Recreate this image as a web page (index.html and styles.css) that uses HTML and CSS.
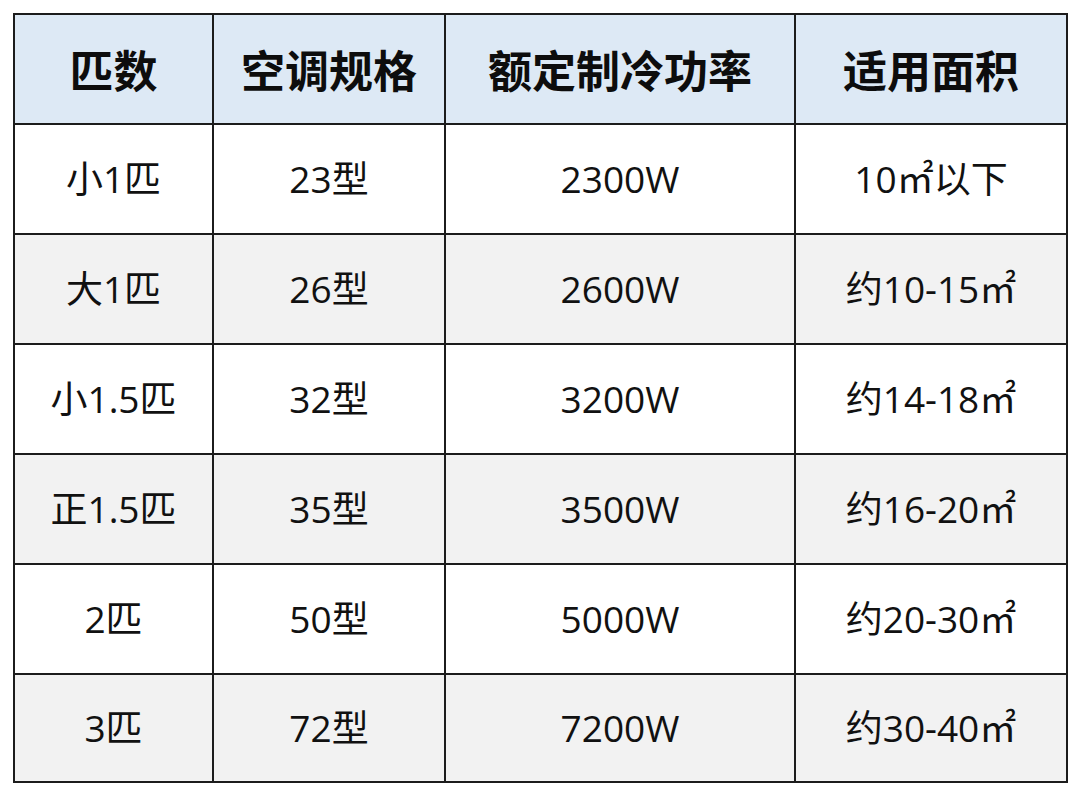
FILE: index.html
```html
<!DOCTYPE html>
<html lang="zh">
<head>
<meta charset="utf-8">
<link rel="stylesheet" href="styles.css">
</head>
<body>
<table class="spec">
  <colgroup>
    <col class="c1"><col class="c2"><col class="c3"><col class="c4">
  </colgroup>
  <thead>
    <tr><th>匹数</th><th>空调规格</th><th>额定制冷功率</th><th>适用面积</th></tr>
  </thead>
  <tbody>
    <tr><td>小1匹</td><td>23型</td><td>2300W</td><td>10㎡以下</td></tr>
    <tr><td>大1匹</td><td>26型</td><td>2600W</td><td>约10-15㎡</td></tr>
    <tr><td>小1.5匹</td><td>32型</td><td>3200W</td><td>约14-18㎡</td></tr>
    <tr><td>正1.5匹</td><td>35型</td><td>3500W</td><td>约16-20㎡</td></tr>
    <tr><td>2匹</td><td>50型</td><td>5000W</td><td>约20-30㎡</td></tr>
    <tr><td>3匹</td><td>72型</td><td>7200W</td><td>约30-40㎡</td></tr>
  </tbody>
</table>
</body>
</html>
```
FILE: styles.css
```css
html, body {
  margin: 0;
  padding: 0;
  background: #ffffff;
}
body {
  padding: 13px 0 0 13px;
  font-family: "Noto Sans CJK SC", "Noto Sans", sans-serif;
  color: #111;
}
.spec {
  border-collapse: collapse;
  width: 1053px;
  table-layout: fixed;
}
.c1 { width: 199px; }
.c2 { width: 232px; }
.c3 { width: 350px; }
.c4 { width: 272px; }
.spec th, .spec td {
  border: 2px solid #1c1c1c;
  text-align: center;
  vertical-align: middle;
  padding: 0;
}
.spec th {
  height: 108px;
  background: #dde9f5;
  font-size: 44px;
  font-weight: 700;
  color: #0d0d0d;
  line-height: 1.2;
}
.spec td {
  height: 108px;
  font-family: "Open Sans", "Noto Sans CJK SC", sans-serif;
  font-size: 37px;
  font-weight: 400;
  line-height: 1.2;
}
.spec tbody tr:nth-child(even) td {
  background: #f2f2f2;
}
.spec tbody tr:last-child td {
  height: 106px;
}
```
